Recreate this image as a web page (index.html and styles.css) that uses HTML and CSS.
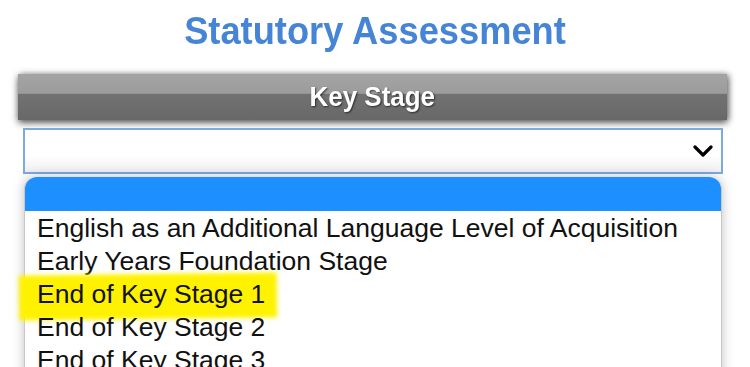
FILE: index.html
```html
<!DOCTYPE html>
<html>
<head>
<meta charset="utf-8">
<link rel="stylesheet" href="styles.css">
</head>
<body>
<div class="page">
  <h1 class="title">Statutory Assessment</h1>
  <div class="bar"><span class="bar-text">Key Stage</span></div>
  <div class="select">
    <svg class="chev" width="20" height="12" viewBox="0 0 20 12"><path d="M2 2 L10 10 L18 2" fill="none" stroke="#000" stroke-width="3.2" stroke-linecap="round" stroke-linejoin="round"/></svg>
  </div>
  <div class="list">
    <div class="list-head"></div>
    <div class="opt"><span>English as an Additional Language Level of Acquisition</span></div>
    <div class="opt"><span>Early Years Foundation Stage</span></div>
    <div class="opt hl"><span class="mark"></span><span>End of Key Stage 1</span></div>
    <div class="opt"><span>End of Key Stage 2</span></div>
    <div class="opt"><span>End of Key Stage 3</span></div>
  </div>
</div>
</body>
</html>
```
FILE: styles.css
```css
html, body {
  margin: 0;
  padding: 0;
  background: #fff;
  overflow: hidden;
}
.page {
  width: 750px;
  height: 367px;
  font-family: "Liberation Sans", Arial, sans-serif;
  box-sizing: border-box;
}
.title {
  margin: 0;
  height: 74px;
  display: flex;
  align-items: center;
  justify-content: center;
  font-size: 39px;
  font-weight: bold;
  color: #4684d6;
  padding-bottom: 12px;
  box-sizing: border-box;
  transform: scaleX(0.93);
}
.bar {
  margin: 0 23px 0 18px;
  height: 46px;
  background: linear-gradient(#a4a4a4 0, #9c9c9c 42%, #727272 44%, #686868 100%);
  box-shadow: 0 3px 7px rgba(0,0,0,0.55), 2px 0 6px rgba(0,0,0,0.35);
  display: flex;
  align-items: center;
  justify-content: center;
}
.bar-text {
  color: #fff;
  font-weight: bold;
  font-size: 27px;
  transform: scaleX(0.96);
  text-shadow: 1px 1px 2px rgba(0,0,0,0.6);
}
.select {
  margin: 8px 27px 0 23px;
  height: 46px;
  box-sizing: border-box;
  border: 2px solid #7eaae2;
  background: linear-gradient(#fff 0, #fff 60%, #f0f0f0 100%);
  display: flex;
  align-items: center;
  justify-content: flex-end;
  padding-right: 8px;
}
.chev {
  display: block;
}
.list {
  margin: 3px 28px 0 24px;
  border: 1px solid #c8c8c8;
  border-top: none;
  border-radius: 12px 12px 0 0;
  box-shadow: 0 0 12px rgba(0,0,0,0.25);
  background: #fff;
  height: 200px;
}
.list-head {
  height: 34px;
  background: #1e8ffe;
  border-radius: 12px 12px 0 0;
}
.opt {
  position: relative;
  height: 33px;
  line-height: 34px;
  font-size: 26.5px;
  color: #111;
  padding-left: 12px;
  white-space: nowrap;
}
.opt span:last-child {
  position: relative;
}
.mark {
  position: absolute;
  left: -6px;
  top: -3px;
  width: 258px;
  height: 45px;
  background: #fff200;
  filter: blur(2px);
  transform: rotate(-0.7deg);
}
```
